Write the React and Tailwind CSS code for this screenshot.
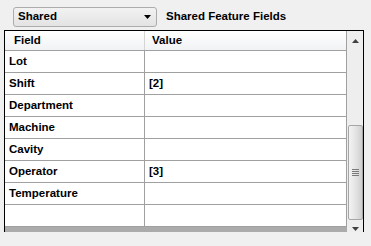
import React from 'react';

const rows = [
  { field: 'Lot', value: '' },
  { field: 'Shift', value: '[2]' },
  { field: 'Department', value: '' },
  { field: 'Machine', value: '' },
  { field: 'Cavity', value: '' },
  { field: 'Operator', value: '[3]' },
  { field: 'Temperature', value: '' },
  { field: '', value: '' },
];

const App = () => {
  const font = { fontFamily: '"Liberation Sans", Arial, sans-serif' };

  return (
    <div className="w-[371px] h-[246px] bg-[#f0f0f0] text-[11.5px] font-bold text-black overflow-hidden" style={font}>
      {/* top bar */}
      <div className="flex items-center pl-[13px] pt-[7px] gap-[9px]">
        <div className="w-[144px] h-[20px] rounded-[3px] border border-[#acacac] bg-gradient-to-b from-[#f2f2f2] to-[#e3e3e3] flex items-center pl-[4px] pr-[4px]">
          <span className="flex-1 leading-none">Shared</span>
          <svg width="7" height="4" viewBox="0 0 7 4" className="mr-[1px]">
            <path d="M0 0H7L3.5 4Z" fill="#000" />
          </svg>
        </div>
        <span className="leading-none">Shared Feature Fields</span>
      </div>

      {/* grid */}
      <div className="ml-[4px] mt-[3px] w-[360px] h-[202px] border-l border-t border-r border-black flex bg-[#ababab]">
        <div className="w-[342px] flex flex-col">
          <div className="flex h-[20px] border-b border-[#a0a0a0] bg-gradient-to-b from-white to-[#f1f2f4]">
            <div className="w-[140px] border-r border-[#d5d5d5] pl-[9px] flex items-center">Field</div>
            <div className="flex-1 pl-[7px] flex items-center border-r border-[#a0a0a0]">Value</div>
          </div>
          {rows.map((r, i) => (
            <div key={i} className="flex h-[22px] border-b border-[#a0a0a0] bg-white">
              <div className="w-[140px] border-r border-[#a0a0a0] pl-[4px] flex items-center">{r.field}</div>
              <div className="flex-1 pl-[4px] flex items-center border-r border-[#a0a0a0]">{r.value}</div>
            </div>
          ))}
        </div>

        {/* scrollbar */}
        <div className="w-[16px] bg-[#eeeeee] flex flex-col items-center">
          <div className="h-[17px] w-full flex items-center justify-center pt-[2px]">
            <svg width="7" height="4" viewBox="0 0 7 4">
              <path d="M3.5 0L7 4H0Z" fill="#404040" />
            </svg>
          </div>
          <div className="mt-[77px] w-[15px] h-[95px] rounded-[2px] border border-[#a6a6a6] bg-gradient-to-r from-[#f3f3f3] via-[#e4e4e4] to-[#cfcfcf] flex items-center justify-center">
            <div className="flex flex-col gap-[1px]">
              <div className="w-[7px] h-[1px] bg-[#7a7a7a]" />
              <div className="w-[7px] h-[1px] bg-[#7a7a7a]" />
              <div className="w-[7px] h-[1px] bg-[#7a7a7a]" />
              <div className="w-[7px] h-[1px] bg-[#7a7a7a]" />
            </div>
          </div>
          <div className="mt-[7px]">
            <svg width="7" height="4" viewBox="0 0 7 4">
              <path d="M0 0H7L3.5 4Z" fill="#404040" />
            </svg>
          </div>
        </div>
      </div>
    </div>
  );
};

export default App;
